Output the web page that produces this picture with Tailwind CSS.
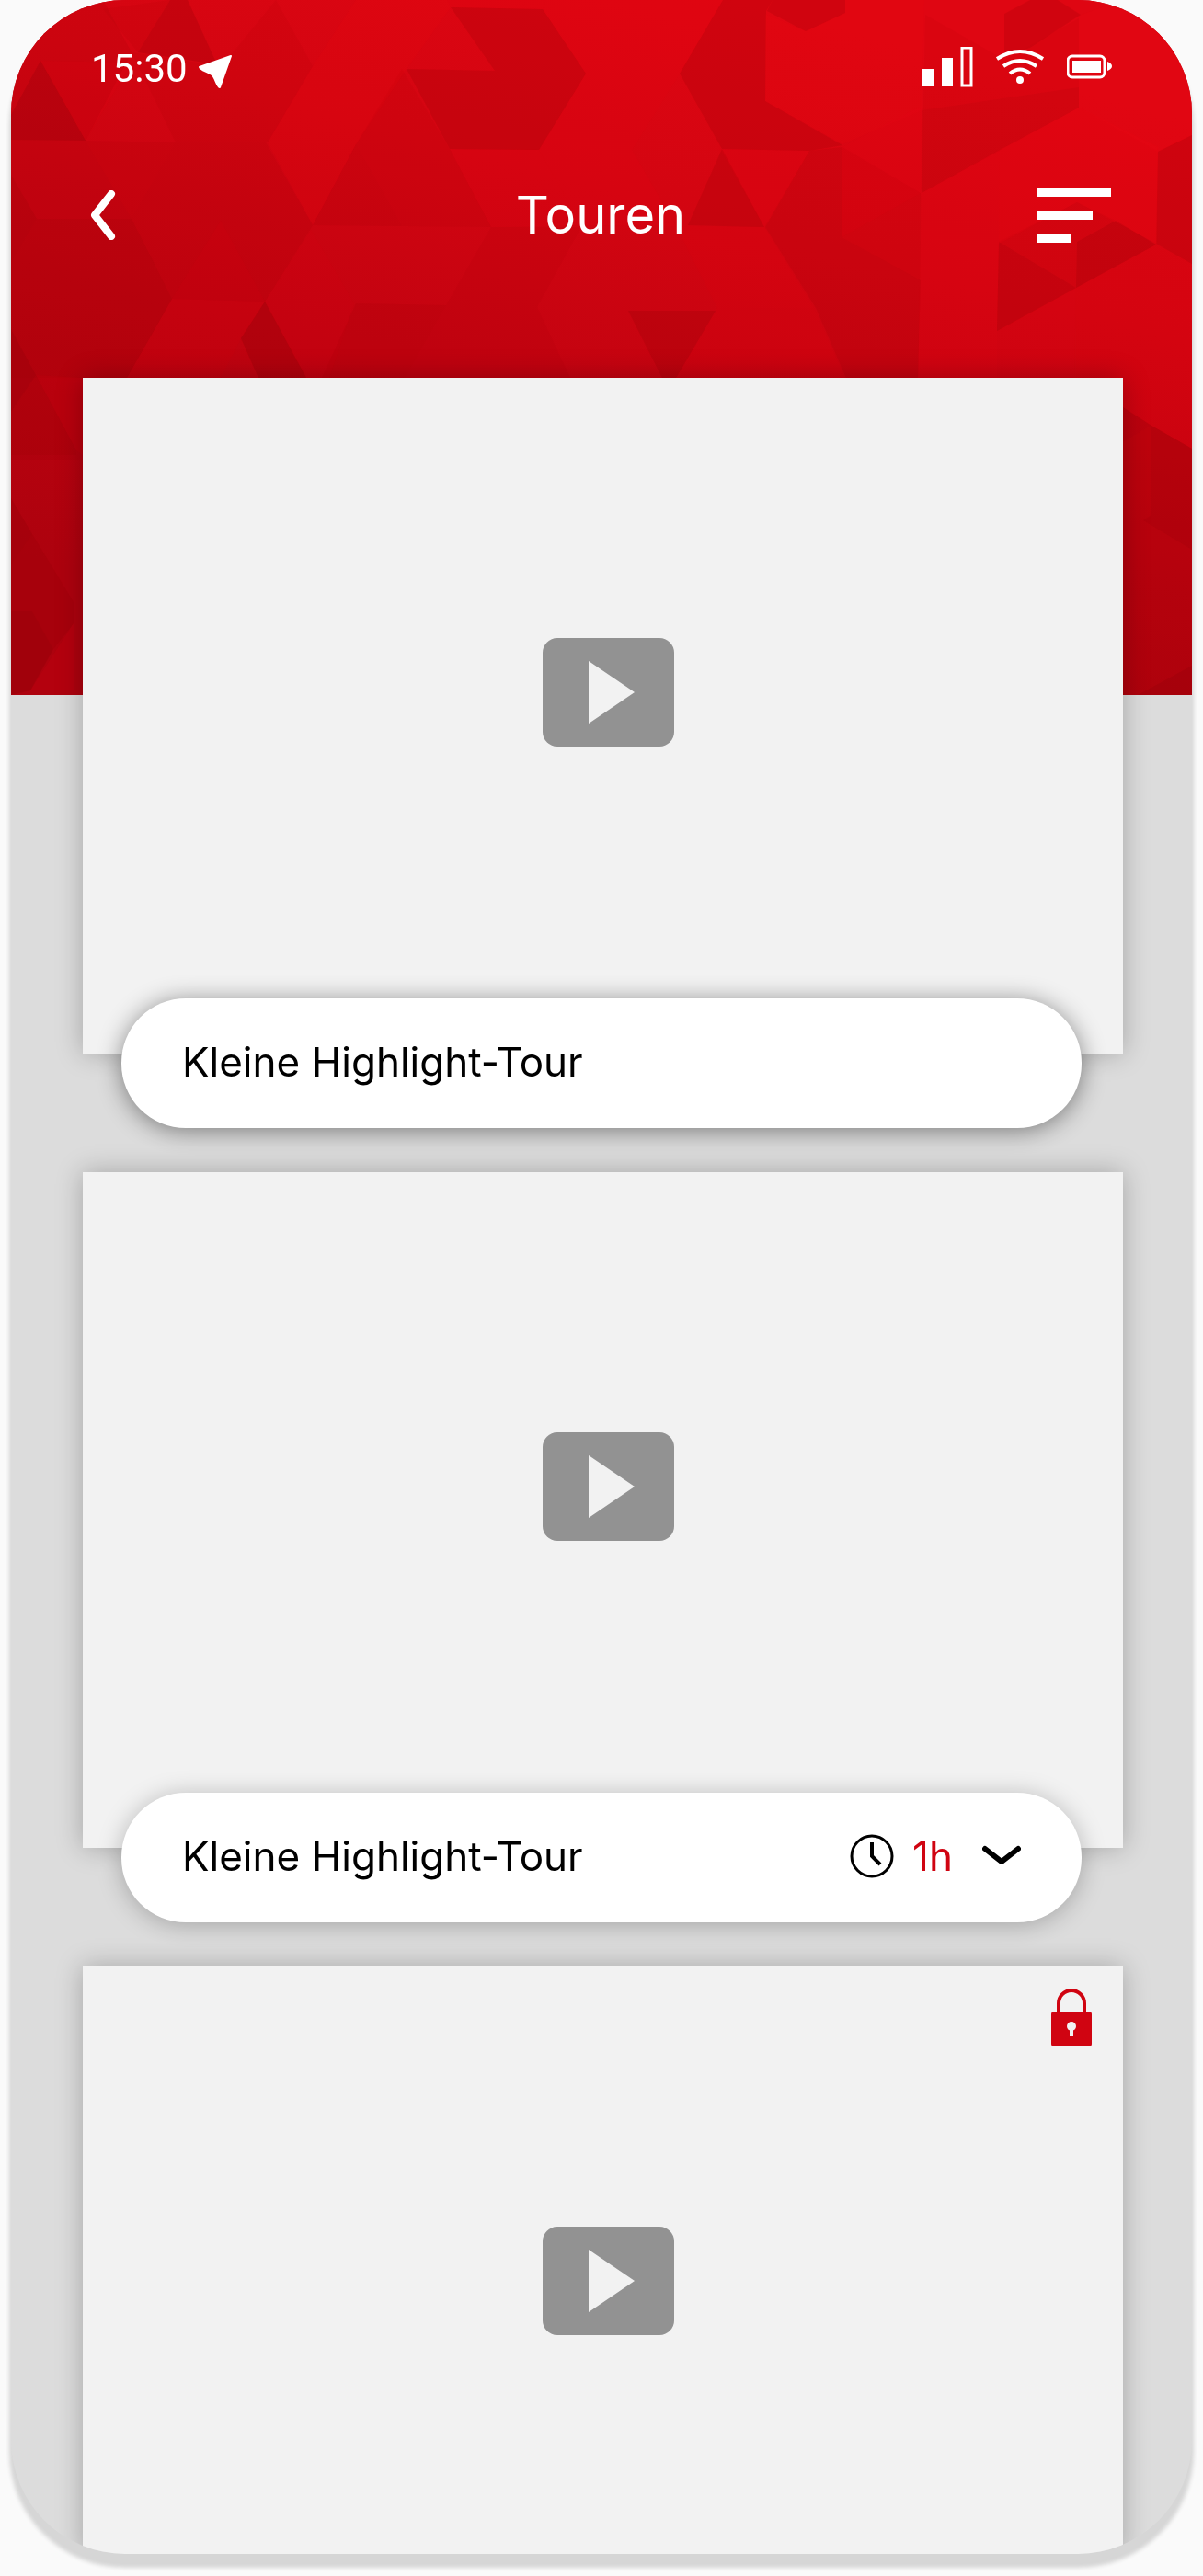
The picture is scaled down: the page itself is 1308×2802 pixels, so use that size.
<!DOCTYPE html>
<html lang="de">
<head>
  <meta charset="UTF-8">
  <meta name="viewport" content="width=device-width, initial-scale=1.0">
  <title>Touren</title>
  <script src="https://cdn.jsdelivr.net/npm/@tailwindcss/browser@4"></script>
</head>
<body class="bg-[#fafafa] px-3 pb-6 font-['Inter',sans-serif] text-black">
  <div class="relative overflow-hidden rounded-[124px] bg-[#dcdcdc] shadow-[0_13px_4px_2px_#d6d6d6]">

    <header class="relative h-[756px] overflow-hidden bg-[#c8040f] text-white">
      <!-- Faceted background -->
      <svg class="absolute inset-0 h-full w-full" viewBox="12 0 1284 756" preserveAspectRatio="xMidYMid slice" aria-hidden="true">
        <defs>
          <linearGradient id="base" gradientUnits="userSpaceOnUse" x1="800" y1="0" x2="600" y2="756">
            <stop offset="0" stop-color="#df0612" />
            <stop offset="0.3" stop-color="#d30511" />
            <stop offset="0.6" stop-color="#c20310" />
            <stop offset="1" stop-color="#ad020e" />
          </linearGradient>
        </defs>
        <rect x="12" width="1284" height="756" fill="url(#base)" />
        <g fill="#900008" opacity=".62">
          <polygon opacity=".2" points="12,0 112,0 143,57 93,153 143,238 187,325 138,411 100,500 12,500" />
          <polygon opacity=".45" points="12,125 44,66 93,153 12,152" />
          <polygon opacity=".38" points="150,57 185,0 204,0 236,70" />
          <polygon opacity=".12" points="112,10 185,0 150,57" />
          <polygon opacity=".12" points="241,72 340,72 291,155 191,155 143,57" />
          <polygon opacity=".1" points="241,72 340,72 300,0" />
          <polygon opacity=".15" points="191,155 289,155 340,245 288,328 187,325 143,238" />
          <polygon opacity=".12" points="93,153 191,155 143,238" />
          <polygon opacity=".15" points="387,157 437,246 340,245" />
          <polygon opacity=".3" points="442,75 538,77 490,8 590,10 637,80 586,163 489,162" />
          <polygon opacity=".1" points="437,75 489,162 534,247 437,246 387,157" />
          <polygon opacity=".25" points="12,190 40,238 12,285" />
          <polygon opacity=".2" points="143,238 187,325 138,411 12,411 12,285 40,238" />
          <polygon opacity=".5" points="288,328 333,411 281,411 262,368" />
          <polygon opacity=".16" points="387,330 485,332 440,411 350,411" />
          <polygon opacity=".1" points="534,247 632,247 584,334 620,411 440,411 485,332" />
          <polygon opacity=".5" points="12,358 39,408 12,448" />
          <polygon opacity=".2" points="39,408 83,490 83,495 12,495 12,448" />
          <polygon opacity=".45" points="12,542 35,581 12,614" />
          <polygon opacity=".3" points="35,581 80,655 80,678 58,706 35,665 12,665 12,614" />
          <polygon opacity=".6" points="12,665 35,665 58,706 33,751 12,756" />
          <polygon opacity=".3" points="786,0 739,80 785,162 880,164 916,158 832,110 833,12 840,0" />
          <polygon opacity=".3" points="840,0 919,0 919,14 876,34 834,12" />
          <polygon opacity=".28" points="1092,15 1120,0 1150,0 1175,16 1120,52 1092,60" />
          <polygon opacity=".1" points="1006,16 1092,65 1173,20 1173,117 1002,210" />
          <polygon opacity=".16" points="1002,120 1087,163 1173,117 1173,95 1002,120" />
          <polygon opacity=".16" points="1002,120 1087,163 1002,210" />
          <polygon opacity=".3" points="1259,165 1296,147 1296,287 1257,265" />
          <polygon opacity=".3" points="785,162 831,247 748,245" />
          <polygon opacity=".35" points="683,338 778,338 735,411 720,411" />
          <polygon opacity=".22" points="832,247 880,164 916,160 915,258 1001,305 998,411 920,411 887,335" />
          <polygon opacity=".12" points="916,160 1001,210 1000,305 915,258" />
          <polygon opacity=".35" points="1086,263 1170,313 1084,360" />
          <polygon opacity=".42" points="1171,263 1213,240 1257,266 1170,313" />
          <polygon opacity=".12" points="1171,220 1213,240 1171,263 1170,313 1086,263" />
          <polygon opacity=".45" points="1221,443 1252,463 1221,481" />
          <polygon opacity=".4" points="1221,481 1252,463 1296,488 1296,756 1221,756" />
          <polygon opacity=".3" points="1252,463 1296,488 1296,598 1243,566 1252,560" />
          <polygon opacity=".5" points="1237,756 1296,724 1296,756" />
        </g>
        <g fill="#f00814" opacity=".4">
          <polygon opacity=".35" points="340,72 387,0 486,0 490,8 442,75 387,157 340,245 291,155" />
          <polygon opacity=".25" points="44,66 143,68 93,153" />
          <polygon opacity=".3" points="486,0 594,0 590,10 490,8" />
          <polygon opacity=".3" points="590,10 594,0 786,0 739,80 687,163 735,246 632,245 586,163 637,80" />
          <polygon opacity=".3" points="783,162 880,164 831,247" />
          <polygon opacity=".22" points="735,246 831,247 885,335 780,335" />
          <polygon opacity=".2" points="780,335 885,335 919,411 735,411" />
          <polygon opacity=".3" points="489,162 586,163 632,245 534,247" />
          <polygon opacity=".18" points="240,240 288,328 262,368 240,411 138,411 187,325" />
          <polygon opacity=".15" points="338,250 385,330 358,411 333,411 288,328" />
          <polygon opacity=".35" points="832,15 876,34 919,14 919,0 1005,0 1002,120 916,157 832,110" />
          <polygon opacity=".3" points="916,160 1002,115 1001,210 915,258" />
          <polygon opacity=".45" points="1087,163 1173,117 1259,160 1258,265 1171,220 1086,265" />
          <polygon opacity=".4" points="1173,17 1220,0 1296,0 1296,147 1259,165 1173,117" />
          <polygon opacity=".3" points="1002,210 1087,163 1086,265 1084,360 1084,411 998,411" />
          <polygon opacity=".12" points="1257,266 1296,287 1296,488 1252,463 1170,411 1170,313" />
          <polygon opacity=".15" points="1084,360 1170,313 1168,411 1084,411" />
          <polygon opacity=".2" points="39,408 83,490 90,495 90,411" />
          <polygon opacity=".3" points="80,678 80,751 33,751" />
        </g>
      </svg>

      <!-- Status bar -->
      <div class="relative flex items-center justify-between pl-[87px] pr-[86px] pt-[51px]">
        <div class="flex items-center gap-3">
          <time class="font-['Roboto',sans-serif] text-[42px] leading-[48px]">15:30</time>
          <svg class="h-12 w-9" viewBox="216 51 36 48" fill="#fff" stroke="#fff" stroke-width="2" stroke-linejoin="round" role="img" aria-label="Standort">
            <path d="M251 61 L217 73 C217 76 229 79 231 82 C234 84 236 95 239 95 Z" />
          </svg>
        </div>
        <div class="flex items-center gap-6">
          <svg class="h-12 w-14" viewBox="1002 51 56 48" fill="#fff" role="img" aria-label="Mobilfunk">
            <rect x="1002" y="75" width="13" height="19" />
            <rect x="1024" y="63" width="12" height="31" />
            <rect x="1046" y="52" width="10" height="41" fill="none" stroke="#fff" stroke-width="3" />
          </svg>
          <svg class="h-12 w-[54px]" viewBox="1081 51 54 48" fill="none" stroke="#fff" stroke-width="4" role="img" aria-label="WLAN">
            <path d="M1083 64 Q1108 48 1133 64" />
            <path d="M1090 72 Q1108 60 1126 72" />
            <path d="M1097 80 Q1108 71 1119 80" />
            <circle cx="1108" cy="87" r="4" fill="#fff" stroke="none" />
          </svg>
          <svg class="h-12 w-[50px]" viewBox="1160 51 50 48" fill="#fff" role="img" aria-label="Akku">
            <rect x="1161" y="61" width="40" height="23" rx="5" fill="none" stroke="#fff" stroke-width="3" />
            <rect x="1166" y="66" width="31" height="13" />
            <path d="M1204 67 Q1209 69 1209 72 Q1209 75 1204 77 Z" />
          </svg>
        </div>
      </div>

      <!-- Title bar -->
      <nav class="relative mt-[105px] grid h-[60px] grid-cols-[1fr_auto_1fr] items-center pl-[86px] pr-[88px]">
        <button type="button" aria-label="Zurück" class="justify-self-start">
          <svg class="block h-[54px] w-7" viewBox="0 0 28 54" fill="none" stroke="#fff" stroke-width="8" stroke-linecap="round" stroke-linejoin="round">
            <path d="M23 4 L5 27 L23 50" />
          </svg>
        </button>
        <h1 class="text-[56px] leading-[60px]">Touren</h1>
        <button type="button" aria-label="Menü" class="flex w-20 flex-col gap-[15px] justify-self-end">
          <span class="h-[10px] w-full bg-white"></span>
          <span class="h-[10px] w-[60px] bg-white"></span>
          <span class="h-[10px] w-9 bg-white"></span>
        </button>
      </nav>
    </header>

    <main class="relative -mt-[345px] ml-[78px] mr-[75px]">
      <article class="mb-12">
        <div class="flex h-[735px] justify-center bg-[#f2f2f2] pl-3 pt-[283px] shadow-[0_0_27px_rgba(0,0,0,0.25)]">
          <button type="button" aria-label="Video abspielen" class="flex h-[118px] w-[143px] items-center rounded-2xl bg-[#929292] pl-[50px]">
            <svg class="h-[68px] w-[50px]" viewBox="0 0 50 68" fill="#f2f2f2"><path d="M0 0 L50 34 L0 68 Z" /></svg>
          </button>
        </div>
        <div class="relative -mt-[60px] ml-[42px] mr-[45px] flex h-[141px] items-center rounded-[70px] bg-white px-[66px] pb-[3px] shadow-[0_3px_27px_rgba(0,0,0,0.45)]">
          <h2 class="text-[44px] leading-[60px]">Kleine Highlight-Tour</h2>
        </div>
      </article>

      <article class="mb-12">
        <div class="flex h-[735px] justify-center bg-[#f2f2f2] pl-3 pt-[283px] shadow-[0_0_27px_rgba(0,0,0,0.25)]">
          <button type="button" aria-label="Video abspielen" class="flex h-[118px] w-[143px] items-center rounded-2xl bg-[#929292] pl-[50px]">
            <svg class="h-[68px] w-[50px]" viewBox="0 0 50 68" fill="#f2f2f2"><path d="M0 0 L50 34 L0 68 Z" /></svg>
          </button>
        </div>
        <div class="relative -mt-[60px] ml-[42px] mr-[45px] flex h-[141px] items-center rounded-[70px] bg-white px-[66px] pb-[3px] shadow-[0_3px_27px_rgba(0,0,0,0.25)]">
          <h2 class="text-[44px] leading-[60px]">Kleine Highlight-Tour</h2>
          <svg class="ml-auto h-12 w-12" viewBox="0 0 48 48" fill="none" stroke="#000" aria-hidden="true">
            <circle cx="24" cy="24" r="22" stroke-width="3" />
            <path d="M24 9 V24 L33 33" stroke-width="4" />
          </svg>
          <span class="ml-5 text-[44px] leading-[60px] text-[#d00411]">1h</span>
          <button type="button" aria-label="Details anzeigen" class="ml-8">
            <svg class="block h-6 w-[42px]" viewBox="0 0 42 24" fill="none" stroke="#000" stroke-width="6" stroke-linecap="round" stroke-linejoin="round">
              <path d="M3 4 L21 18 L39 4" />
            </svg>
          </button>
        </div>
      </article>

      <article>
        <div class="relative flex h-[639px] justify-center bg-[#f2f2f2] pl-3 pt-[283px] shadow-[0_0_27px_rgba(0,0,0,0.25)]">
          <button type="button" aria-label="Video abspielen" class="flex h-[118px] w-[143px] items-center rounded-2xl bg-[#929292] pl-[50px]">
            <svg class="h-[68px] w-[50px]" viewBox="0 0 50 68" fill="#f2f2f2"><path d="M0 0 L50 34 L0 68 Z" /></svg>
          </button>
          <svg class="absolute right-[34px] top-6 h-16 w-11" viewBox="0 0 44 64" role="img" aria-label="Gesperrt">
            <path d="M8 27 V16 A14 14 0 0 1 36 16 V27" fill="none" stroke="#d00411" stroke-width="4" />
            <rect y="25" width="44" height="38" rx="3" fill="#d00411" />
            <circle cx="22" cy="41" r="5" fill="#f2f2f2" />
            <rect x="20" y="43" width="4" height="9" fill="#f2f2f2" />
          </svg>
        </div>
      </article>
    </main>
  </div>
</body>
</html>
